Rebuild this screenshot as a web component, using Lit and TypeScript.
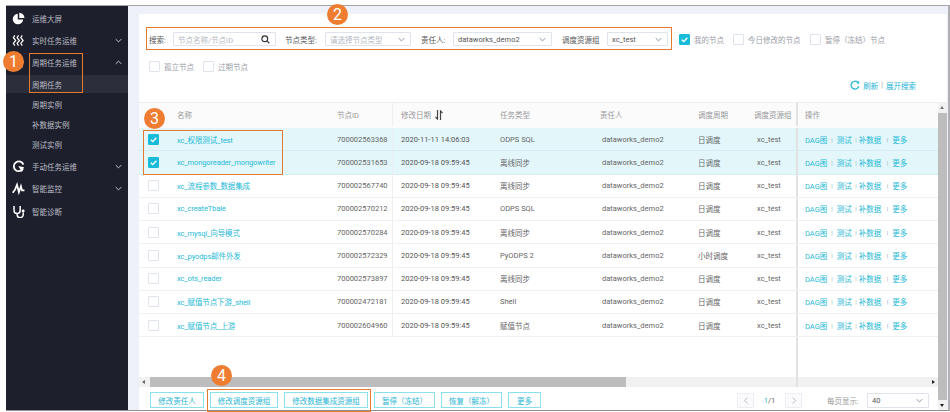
import { LitElement, html, css, svg } from "lit";
import { customElement } from "lit/decorators.js";

const chev = (up = false) => html`<svg class="chev" viewBox="0 0 10 6"><path d=${up ? "M1 5l4-4 4 4" : "M1 1l4 4 4-4"} fill="none" stroke="currentColor" stroke-width="1.4"/></svg>`;
const check = html`<svg viewBox="0 0 12 12"><path d="M2.4 6.2l2.6 2.6 4.8-5.2" fill="none" stroke="#fff" stroke-width="1.8"/></svg>`;

const icons: Record<string, unknown> = {
  pie: svg`<path d="M6.2 2A5.6 5.6 0 1 0 12 8H6.2z" fill="#fff"/><path d="M7.8 .8a5.6 5.6 0 0 1 5.6 5.7H7.8z" fill="#fff"/>`,
  wave: svg`<path d="M3 1.5L1.5 4 4 7 1.5 10 3 12.5M7 1.5L5.5 4 8 7 5.5 10 7 12.5M11 1.5L9.5 4 12 7 9.5 10 11 12.5" fill="none" stroke="#fff" stroke-width="1.3"/>`,
  manual: svg`<path d="M11.8 9.6A5.3 5.3 0 1 1 12.3 5" fill="none" stroke="#fff" stroke-width="1.9"/><path d="M6.8 6.4l6.2 1.4-2.4 5z" fill="#fff"/>`,
  pulse: svg`<path d="M.8 11.5L3.4 8l2-5 2 8 2.2-6.5 1.2 4.5h2.6" fill="none" stroke="#fff" stroke-width="1.9"/>`,
  steth: svg`<path d="M2.2 1.2v4.6a3.3 3.3 0 0 0 6.6 0V1.2M5.5 9v1.3a3.3 3.3 0 0 0 6.6 0V8" fill="none" stroke="#fff" stroke-width="1.6"/><circle cx="12" cy="6.4" r="1.6" fill="#fff"/>`,
};

const rows = [
  ["xc_权限测试_test", "700002563368", "2020-11-11 14:06:03", "ODPS SQL", "日调度", true],
  ["xc_mongoreader_mongowriter", "700002531653", "2020-09-18 09:59:45", "离线同步", "日调度", true],
  ["xc_流程参数_数据集成", "700002567740", "2020-09-18 09:59:45", "离线同步", "日调度", false],
  ["xc_createTbale", "700002570212", "2020-09-18 09:59:45", "ODPS SQL", "日调度", false],
  ["xc_mysql_向导模式", "700002570284", "2020-09-18 09:59:45", "离线同步", "日调度", false],
  ["xc_pyodps邮件外发", "700002572329", "2020-09-18 09:59:45", "PyODPS 2", "小时调度", false],
  ["xc_ots_reader", "700002573897", "2020-09-18 09:59:45", "离线同步", "日调度", false],
  ["xc_赋值节点下游_shell", "700002472181", "2020-09-18 09:59:45", "Shell", "日调度", false],
  ["xc_赋值节点_上游", "700002604960", "2020-09-18 09:59:45", "赋值节点", "日调度", false],
] as const;

const buttons: [string, string][] = [
  ["修改责任人", "b54"], ["修改调度资源组", "b68"], ["修改数据集成资源组", "b84"],
  ["暂停（冻结）", "b61"], ["恢复（解冻）", "b61"], ["更多", "b33"],
];

@customElement("app-root")
export class AppRoot extends LitElement {
  static styles = css`
    :host { display: block; width: 950px; height: 412px; background: #fff; overflow: hidden; position: relative;
      font: 7.5px Roboto, "Noto Sans CJK SC", sans-serif; color: #666; }
    * { box-sizing: border-box; }
    .frame { display: flex; height: 406px; margin: 5px 0 0 6px; width: 944px; border-top: 1px solid #a5a5a5; border-right: 2px solid #b0b0b0; border-bottom: 1px solid #8f8f8f; }
    .side { width: 122px; flex: none; background: #1d1f2c; color: #bcbdc4; padding-top: 1px; }
    .item { height: 22px; display: flex; align-items: center; padding: 0 6px 0 6px; }
    .item .ic { width: 13px; height: 13px; margin-right: 7px; flex: none; }
    .item span { flex: 1; }
    .chev { width: 7px; height: 5px; color: #c9cad0; }
    .sub { height: 20px; display: flex; align-items: center; padding-left: 26px; }
    .sub.on { background: #2c2e3c; height: 18px; margin-top: 2px; }
    .mt1 { margin-top: 1px; }
    .main { flex: 1; background: #eef1fa; padding: 8px 1px 0 11px; min-width: 0; }
    .card { background: #fff; height: 396px; display: flex; flex-direction: column; }
    .filters { height: 88px; flex: none; padding: 18px 0 0 10px; position: relative; }
    .f1, .f2 { display: flex; align-items: center; height: 14px; }
    .f2 { margin-top: 13px; }
    .input { height: 14px; border: 1px solid #dfe3ec; border-radius: 1px; display: flex; align-items: center; justify-content: space-between; padding: 0 5px 0 4px; color: #555; flex: none; }
    .input .ph { color: #b4b8c2; }
    .input .chev { color: #8d94a3; }
    .w-search { width: 103px; margin-right: 9px; }
    .w-type { width: 86px; margin-right: 10px; }
    .w-owner { width: 99px; margin-right: 10px; }
    .w-res { width: 61px; margin-right: 11px; }
    .lab { flex: none; color: #555; }
    .l-search { width: 24px; } .l-type { width: 40px; } .l-owner { width: 32px; } .l-res { width: 45px; }
    .cb { width: 11px; height: 11px; border: 1px solid #dfe3ec; border-radius: 1px; flex: none; background: #fff; display: block; }
    .cb.on { background: #18bcd8; border-color: #18bcd8; }
    .cb svg { display: block; width: 100%; height: 100%; }
    .opt { color: #9a9da5; margin-left: 4px; flex: none; }
    .o39 { width: 39px; } .o62 { width: 62px; }
    .actions { display: flex; align-items: center; gap: 3px; position: absolute; right: 31px; top: 64px; color: #1eb4d4; height: 14px; }
    .actions svg { width: 10px; height: 10px; }
    .sep { color: #999; font-size: 7px; }
    .body { flex: 1; display: flex; min-height: 0; }
    .left { flex: 1; min-width: 0; display: flex; flex-direction: column; }
    .tbl { height: 275px; flex: none; display: flex; flex-direction: column; border-top: 1px solid #eceef2; }
    .tr { display: grid; grid-template-columns: 38px 160px 55px 108px 100px 98px 56px 42px 142px; align-items: center; height: 23.25px; flex: none; border-bottom: 1px solid #eef0f3; }
    .th { height: 25px; background: #fbfbfc; color: #999; border-bottom: none; padding-bottom: 2px; }
    .tr.sel { background: #e3f7fb; border-bottom-color: #d5eef3; }
    .tr > div { white-space: nowrap; display: flex; align-items: center; height: 100%; }
    .c0 { padding-left: 9px; }
    .c3 { padding-left: 8px; border-left: 1px solid #eceef2; color: #555; }
    .th .c3 { color: #999; }
    .own { padding-left: 2px; } .res { padding-left: 3px; }
    .th .own, .th .res { padding-left: 0; }
    .ops { padding-left: 7px; border-left: 2px solid #e2e2e2; color: #1fb9d6; gap: 4px; }
    .ops i { font-style: normal; color: #9aa; font-size: 6px; }
    .ops i.s2 { margin: 0 -2px 0 -0.5px; }
    .ops i.s3 { margin-left: 1.5px; }
    .th .ops { color: #999; }
    .name { color: #1fb9d6; letter-spacing: -0.12px; }
    .sort { width: 8px; height: 10px; margin-left: 4px; }
    .blank { flex: 1; margin-left: 657px; border-left: 2px solid #e2e2e2; }
    .hbar { height: 10px; flex: none; background: #f1f1f1; display: flex; align-items: center; position: relative; }
    .h-thumb { margin-left: 11px; width: 476px; height: 100%; background: #bdbdbd; }
    .mark { position: absolute; left: 657px; top: 0; bottom: 0; width: 2px; background: #e2e2e2; }
    .arrow-l, .arrow-r { position: absolute; top: 3px; width: 0; height: 0; border-top: 2px solid transparent; border-bottom: 2px solid transparent; }
    .arrow-l { left: 3px; border-right: 3px solid #666; }
    .arrow-r { right: 3px; border-left: 3px solid #222; }
    .foot { flex: 1; display: flex; align-items: center; padding: 3px 9px 0 11px; gap: 6px; }
    .btn { height: 16px; border: 1px solid #8be0ee; color: #28b5d2; display: flex; align-items: center; justify-content: center; flex: none; }
    .b54 { width: 54px; } .b68 { width: 68px; } .b84 { width: 84px; } .b61 { width: 61px; } .b33 { width: 33px; }
    .pager { margin-left: auto; display: flex; align-items: center; }
    .pg { width: 17px; height: 15px; border: 1px solid #eceef4; background: #fafafc; display: flex; align-items: center; justify-content: center; color: #b8bcc6; }
    .pg svg { width: 4px; height: 7px; }
    .count { width: 31px; text-align: center; color: #666; }
    .count b { font-weight: 400; color: #1fb9d6; }
    .per { color: #999; margin: 0 7px 0 25px; width: 33px; white-space: nowrap; }
    .w-page { width: 62px; height: 15px; }
    .vbar { width: 9px; flex: none; background: #f1f1f1; position: relative; }
    .thumb { position: absolute; left: 0; right: 0; top: 11px; bottom: 10px; background: #bdbdbd; }
    .up, .down { position: absolute; left: 2px; width: 0; height: 0; border-left: 2.5px solid transparent; border-right: 2.5px solid transparent; }
    .up { top: 4px; border-bottom: 3px solid #777; }
    .down { bottom: 3px; border-top: 3px solid #222; }
    .box { position: absolute; border: 1px solid #e57a2e; pointer-events: none; }
    .b1 { left: 29px; top: 53px; width: 54px; height: 40px; }
    .b2 { left: 146px; top: 27px; width: 526px; height: 23px; }
    .b3 { left: 143px; top: 130px; width: 140px; height: 45px; }
    .b4 { left: 207px; top: 389px; width: 164px; height: 23px; }
    .dot { position: absolute; width: 21px; height: 21px; border-radius: 50%; background: #ee7d31; color: #fff; display: flex; align-items: center; justify-content: center; font: 16px Roboto, sans-serif; }
    .d1 { left: 3px; top: 51px; } .d2 { left: 327px; top: 4px; } .d3 { left: 144px; top: 108px; } .d4 { left: 211px; top: 365px; }
  `;

  render() {
    const side = (ic: string, t: string, ch?: "up" | "down", cls = "") => html`<div class="item ${cls}"><svg class="ic" viewBox="0 0 14 14">${icons[ic]}</svg><span>${t}</span>${ch ? chev(ch === "up") : ""}</div>`;
    return html`
      <div class="frame">
        <nav class="side">
          ${side("pie", "运维大屏")}
          ${side("wave", "实时任务运维", "down")}
          ${side("wave", "周期任务运维", "up")}
          <div class="sub on">周期任务</div>
          <div class="sub mt1">周期实例</div>
          <div class="sub">补数据实例</div>
          <div class="sub">测试实例</div>
          ${side("manual", "手动任务运维", "down", "mt1")}
          ${side("pulse", "智能监控", "down")}
          ${side("steth", "智能诊断", undefined, "mt1")}
        </nav>
        <main class="main">
          <div class="card">
            <div class="filters">
              <div class="f1">
                <span class="lab l-search">搜索:</span>
                <div class="input w-search"><span class="ph">节点名称/节点ID</span><svg width="9" height="9" viewBox="0 0 10 10"><circle cx="4.2" cy="4.2" r="3.2" fill="none" stroke="#333" stroke-width="1.3"/><path d="M6.6 6.6l2.6 2.6" stroke="#333" stroke-width="1.3"/></svg></div>
                <span class="lab l-type">节点类型:</span>
                <div class="input w-type"><span class="ph">请选择节点类型</span>${chev()}</div>
                <span class="lab l-owner">责任人:</span>
                <div class="input w-owner"><span>dataworks_demo2</span>${chev()}</div>
                <span class="lab l-res">调度资源组</span>
                <div class="input w-res"><span>xc_test</span>${chev()}</div>
                <span class="cb on">${check}</span><span class="opt o39">我的节点</span>
                <span class="cb"></span><span class="opt o62">今日修改的节点</span>
                <span class="cb"></span><span class="opt">暂停（冻结）节点</span>
              </div>
              <div class="f2">
                <span class="cb"></span><span class="opt o39">孤立节点</span>
                <span class="cb"></span><span class="opt">过期节点</span>
              </div>
              <div class="actions">
                <svg viewBox="0 0 12 12"><path d="M10.5 7.5A4.7 4.7 0 1 1 9.3 2.8" fill="none" stroke="#1eb4d4" stroke-width="1.4"/><path d="M7.5 3.8L11 4.4V.8z" fill="#1eb4d4"/></svg>
                <span>刷新</span><span class="sep">|</span><span>展开搜索</span>
              </div>
            </div>
            <div class="body">
              <div class="left">
                <div class="tbl">
                  <div class="tr th">
                    <div></div><div>名称</div><div>节点ID</div>
                    <div class="c3">修改日期<svg class="sort" viewBox="0 0 8 10"><path d="M2.5 0v9L.5 7M5.5 10V1l2 2" fill="none" stroke="#444" stroke-width="1.2"/></svg></div>
                    <div>任务类型</div><div class="own">责任人</div><div>调度周期</div><div class="res">调度资源组</div>
                    <div class="ops">操作</div>
                  </div>
                  ${rows.map(r => html`
                    <div class="tr ${r[5] ? "sel" : ""}">
                      <div class="c0"><span class="cb ${r[5] ? "on" : ""}">${r[5] ? check : ""}</span></div>
                      <div class="name">${r[0]}</div>
                      <div>${r[1]}</div>
                      <div class="c3">${r[2]}</div>
                      <div>${r[3]}</div>
                      <div class="own">dataworks_demo2</div>
                      <div>${r[4]}</div>
                      <div class="res">xc_test</div>
                      <div class="ops"><span>DAG图</span><i>|</i><span>测试</span><i class="s2">|</i><span>补数据</span><i class="s3">|</i><span>更多</span></div>
                    </div>`)}
                  <div class="blank"></div>
                </div>
                <div class="hbar"><span class="arrow-l"></span><div class="h-thumb"></div><span class="mark"></span><span class="arrow-r"></span></div>
                <div class="foot">
                  ${buttons.map(([t, c]) => html`<div class="btn ${c}">${t}</div>`)}
                  <div class="pager">
                    <div class="pg"><svg viewBox="0 0 4 7"><path d="M3.5.5l-3 3 3 3" fill="none" stroke="currentColor"/></svg></div>
                    <div class="count"><b>1</b>/1</div>
                    <div class="pg"><svg viewBox="0 0 4 7"><path d="M.5.5l3 3-3 3" fill="none" stroke="currentColor"/></svg></div>
                    <span class="per">每页显示:</span>
                    <div class="input w-page"><span>40</span>${chev()}</div>
                  </div>
                </div>
              </div>
              <div class="vbar"><span class="up"></span><div class="thumb"></div><span class="down"></span></div>
            </div>
          </div>
        </main>
      </div>
      <div class="box b1"></div><div class="box b2"></div><div class="box b3"></div><div class="box b4"></div>
      <div class="dot d1">1</div><div class="dot d2">2</div><div class="dot d3">3</div><div class="dot d4">4</div>
    `;
  }
}
